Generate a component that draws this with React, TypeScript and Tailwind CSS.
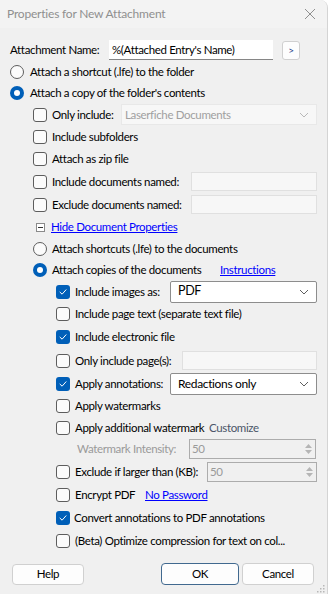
import React from "react";

const font = { fontFamily: '"Segoe UI", Lato, sans-serif' };

function Check({ checked = false }: { checked?: boolean }) {
  if (checked) {
    return (
      <span className="flex h-[14px] w-[14px] shrink-0 items-center justify-center rounded-[3px] bg-[#005fb8]">
        <svg width="10" height="10" viewBox="0 0 10 10" fill="none">
          <path d="M2 5.2 L4.1 7.2 L8 2.8" stroke="#ffffff" strokeWidth="1" strokeLinecap="round" strokeLinejoin="round" />
        </svg>
      </span>
    );
  }
  return <span className="h-[14px] w-[14px] shrink-0 rounded-[3px] border border-[#5d5d5d] bg-[#fbfbfb]" />;
}

function Radio({ checked = false }: { checked?: boolean }) {
  if (checked) {
    return (
      <span className="flex h-[14px] w-[14px] shrink-0 items-center justify-center rounded-full bg-[#005fb8]">
        <span className="h-[6px] w-[6px] rounded-full bg-white" />
      </span>
    );
  }
  return <span className="h-[14px] w-[14px] shrink-0 rounded-full border border-[#5d5d5d] bg-[#fbfbfb]" />;
}

function Chevron({ color = "#5f5f5f" }: { color?: string }) {
  return (
    <svg width="10" height="6" viewBox="0 0 10 6" fill="none">
      <path d="M1 1 L5 5 L9 1" stroke={color} strokeWidth="1" />
    </svg>
  );
}

function Spin({ value }: { value: string }) {
  return (
    <div className="flex h-[20px] flex-1 items-center border border-[#acacac] bg-[#f0f0f0] pl-[2px] pr-[3px]">
      <span className="flex-1 text-[#9a9a9a]">{value}</span>
      <div className="flex flex-col items-center gap-[2px]">
        <svg width="7" height="4" viewBox="0 0 7 4">
          <path d="M0 4 L3.5 0 L7 4 Z" fill="#b5b5b5" />
        </svg>
        <svg width="7" height="4" viewBox="0 0 7 4">
          <path d="M0 0 L3.5 4 L7 0 Z" fill="#b5b5b5" />
        </svg>
      </div>
    </div>
  );
}

function Row({ h, indent, children }: { h: number; indent: string; children: React.ReactNode }) {
  return (
    <div className={`flex items-center whitespace-nowrap ${indent}`} style={{ height: h }}>
      {children}
    </div>
  );
}

export default function App() {
  return (
    <div className="h-[594px] w-[330px] bg-white text-[11.5px] tracking-[-0.35px] text-[#000000]" style={font}>
      <div className="flex h-full w-[328px] flex-col overflow-hidden rounded-tr-[8px] border-r border-[#d4d4d4] bg-[#f0f0f0]">
        <div className="flex h-[28px] shrink-0 items-center justify-between bg-[#f3f3f3] pl-[7px] pr-[11px]">
          <span className="text-[12px] tracking-[-0.2px] text-[#8f8f8f]">Properties for New Attachment</span>
          <svg width="12" height="12" viewBox="0 0 12 12">
            <path d="M1 1 L11 11 M11 1 L1 11" stroke="#8f8f8f" strokeWidth="1" />
          </svg>
        </div>

        <div className="flex flex-col pt-[11px]">
          <Row h={22} indent="pl-[10px]">
            <span className="w-[99px] shrink-0">Attachment Name:</span>
            <div className="flex h-[20px] w-[164px] shrink-0 items-center border-b border-[#868686] bg-white pl-[3px]">
              %(Attached Entry's Name)
            </div>
            <button className="ml-[9px] flex h-[19px] w-[18px] items-center justify-center rounded-[3px] border border-[#d0d0d0] bg-[#fdfdfd] text-[10px] text-[#1a3a8a]">
              &gt;
            </button>
          </Row>
          <Row h={22} indent="pl-[10px]">
            <Radio />
            <span className="ml-[6px]">Attach a shortcut (.lfe) to the folder</span>
          </Row>
          <Row h={20} indent="pl-[10px]">
            <Radio checked />
            <span className="ml-[6px]">Attach a copy of the folder's contents</span>
          </Row>
          <Row h={23} indent="pl-[33px]">
            <Check />
            <span className="ml-[5px] w-[69px] shrink-0">Only include:</span>
            <div className="flex h-[21px] w-[196px] shrink-0 items-center justify-between border border-[#e8e8e8] bg-[#f7f7f7] pl-[3px] pr-[7px] text-[#a0a0a0]">
              <span>Laserfiche Documents</span>
              <Chevron color="#b8b8b8" />
            </div>
          </Row>
          <Row h={22} indent="pl-[33px]">
            <Check />
            <span className="ml-[5px]">Include subfolders</span>
          </Row>
          <Row h={22} indent="pl-[33px]">
            <Check />
            <span className="ml-[5px]">Attach as zip file</span>
          </Row>
          <Row h={23} indent="pl-[33px]">
            <Check />
            <span className="ml-[5px] w-[139px] shrink-0">Include documents named:</span>
            <div className="h-[19px] w-[126px] shrink-0 border border-[#e0e0e0] bg-[#f7f7f7]" />
          </Row>
          <Row h={23} indent="pl-[33px]">
            <Check />
            <span className="ml-[5px] w-[139px] shrink-0">Exclude documents named:</span>
            <div className="h-[19px] w-[126px] shrink-0 border border-[#e0e0e0] bg-[#f7f7f7]" />
          </Row>
          <Row h={22} indent="pl-[36px]">
            <span className="flex h-[9px] w-[9px] items-center justify-center border border-[#8a8a8a] bg-white">
              <span className="h-[1px] w-[5px] bg-[#333333]" />
            </span>
            <span className="ml-[6px] text-[#0000ff] underline">Hide Document Properties</span>
          </Row>
          <Row h={21} indent="pl-[33px]">
            <Radio />
            <span className="ml-[5px]">Attach shortcuts (.lfe) to the documents</span>
          </Row>
          <Row h={21} indent="pl-[33px]">
            <Radio checked />
            <span className="ml-[5px] w-[168px] shrink-0">Attach copies of the documents</span>
            <span className="text-[#0000ff] underline">Instructions</span>
          </Row>
          <Row h={23} indent="pl-[56px]">
            <Check checked />
            <span className="ml-[5px] w-[95px] shrink-0">Include images as:</span>
            <div className="flex h-[22px] w-[147px] shrink-0 items-center justify-between rounded-[2px] border border-[#8d8d8d] bg-white pl-[7px] pr-[7px] text-[12.5px]">
              <span>PDF</span>
              <Chevron />
            </div>
          </Row>
          <Row h={22} indent="pl-[56px]">
            <Check />
            <span className="ml-[5px]">Include page text (separate text file)</span>
          </Row>
          <Row h={24} indent="pl-[56px]">
            <Check checked />
            <span className="ml-[5px]">Include electronic file</span>
          </Row>
          <Row h={23} indent="pl-[56px]">
            <Check />
            <span className="ml-[5px] w-[107px] shrink-0">Only include page(s):</span>
            <div className="h-[19px] w-[135px] shrink-0 border border-[#e0e0e0] bg-[#f7f7f7]" />
          </Row>
          <Row h={23} indent="pl-[56px]">
            <Check checked />
            <span className="ml-[5px] w-[95px] shrink-0">Apply annotations:</span>
            <div className="flex h-[22px] w-[147px] shrink-0 items-center justify-between rounded-[2px] border border-[#8d8d8d] bg-white pl-[7px] pr-[7px] text-[12px]">
              <span>Redactions only</span>
              <Chevron />
            </div>
          </Row>
          <Row h={22} indent="pl-[56px]">
            <Check />
            <span className="ml-[5px]">Apply watermarks</span>
          </Row>
          <Row h={21} indent="pl-[56px]">
            <Check />
            <span className="ml-[5px] w-[134px] shrink-0">Apply additional watermark</span>
            <span className="text-[#4a5568]">Customize</span>
          </Row>
          <Row h={22} indent="pl-[77px]">
            <span className="w-[112px] shrink-0 text-[#9a9a9a]">Watermark Intensity:</span>
            <div className="flex w-[127px] shrink-0">
              <Spin value="50" />
            </div>
          </Row>
          <Row h={23} indent="pl-[56px]">
            <Check />
            <span className="ml-[5px] w-[132px] shrink-0">Exclude if larger than (KB):</span>
            <div className="flex w-[110px] shrink-0">
              <Spin value="50" />
            </div>
          </Row>
          <Row h={23} indent="pl-[56px]">
            <Check />
            <span className="ml-[5px] w-[70px] shrink-0">Encrypt PDF</span>
            <span className="text-[#0000ff] underline">No Password</span>
          </Row>
          <Row h={23} indent="pl-[56px]">
            <Check checked />
            <span className="ml-[4px]">Convert annotations to PDF annotations</span>
          </Row>
          <Row h={23} indent="pl-[56px]">
            <Check />
            <span className="ml-[5px]">(Beta) Optimize compression for text on col...</span>
          </Row>
        </div>

        <div className="mt-[11px] flex items-center pl-[12px] pr-[13px]">
          <button className="h-[21px] w-[72px] rounded-[4px] border border-[#d0d0d0] bg-[#fdfdfd]">Help</button>
          <div className="flex-1" />
          <button className="h-[22px] w-[78px] rounded-[4px] border border-[#41698f] bg-[#fdfdfd]">OK</button>
          <button className="ml-[3px] h-[22px] w-[72px] rounded-[4px] border border-[#d0d0d0] bg-[#fdfdfd]">Cancel</button>
        </div>
        <div className="flex flex-1 items-end justify-end pb-[2px] pr-[2px]">
          <svg width="8" height="8" viewBox="0 0 8 8">
            <rect x="6" y="0" width="1.5" height="1.5" fill="#b8b8b8" />
            <rect x="3" y="3" width="1.5" height="1.5" fill="#b8b8b8" />
            <rect x="6" y="3" width="1.5" height="1.5" fill="#b8b8b8" />
            <rect x="0" y="6" width="1.5" height="1.5" fill="#b8b8b8" />
            <rect x="3" y="6" width="1.5" height="1.5" fill="#b8b8b8" />
            <rect x="6" y="6" width="1.5" height="1.5" fill="#b8b8b8" />
          </svg>
        </div>
      </div>
    </div>
  );
}
